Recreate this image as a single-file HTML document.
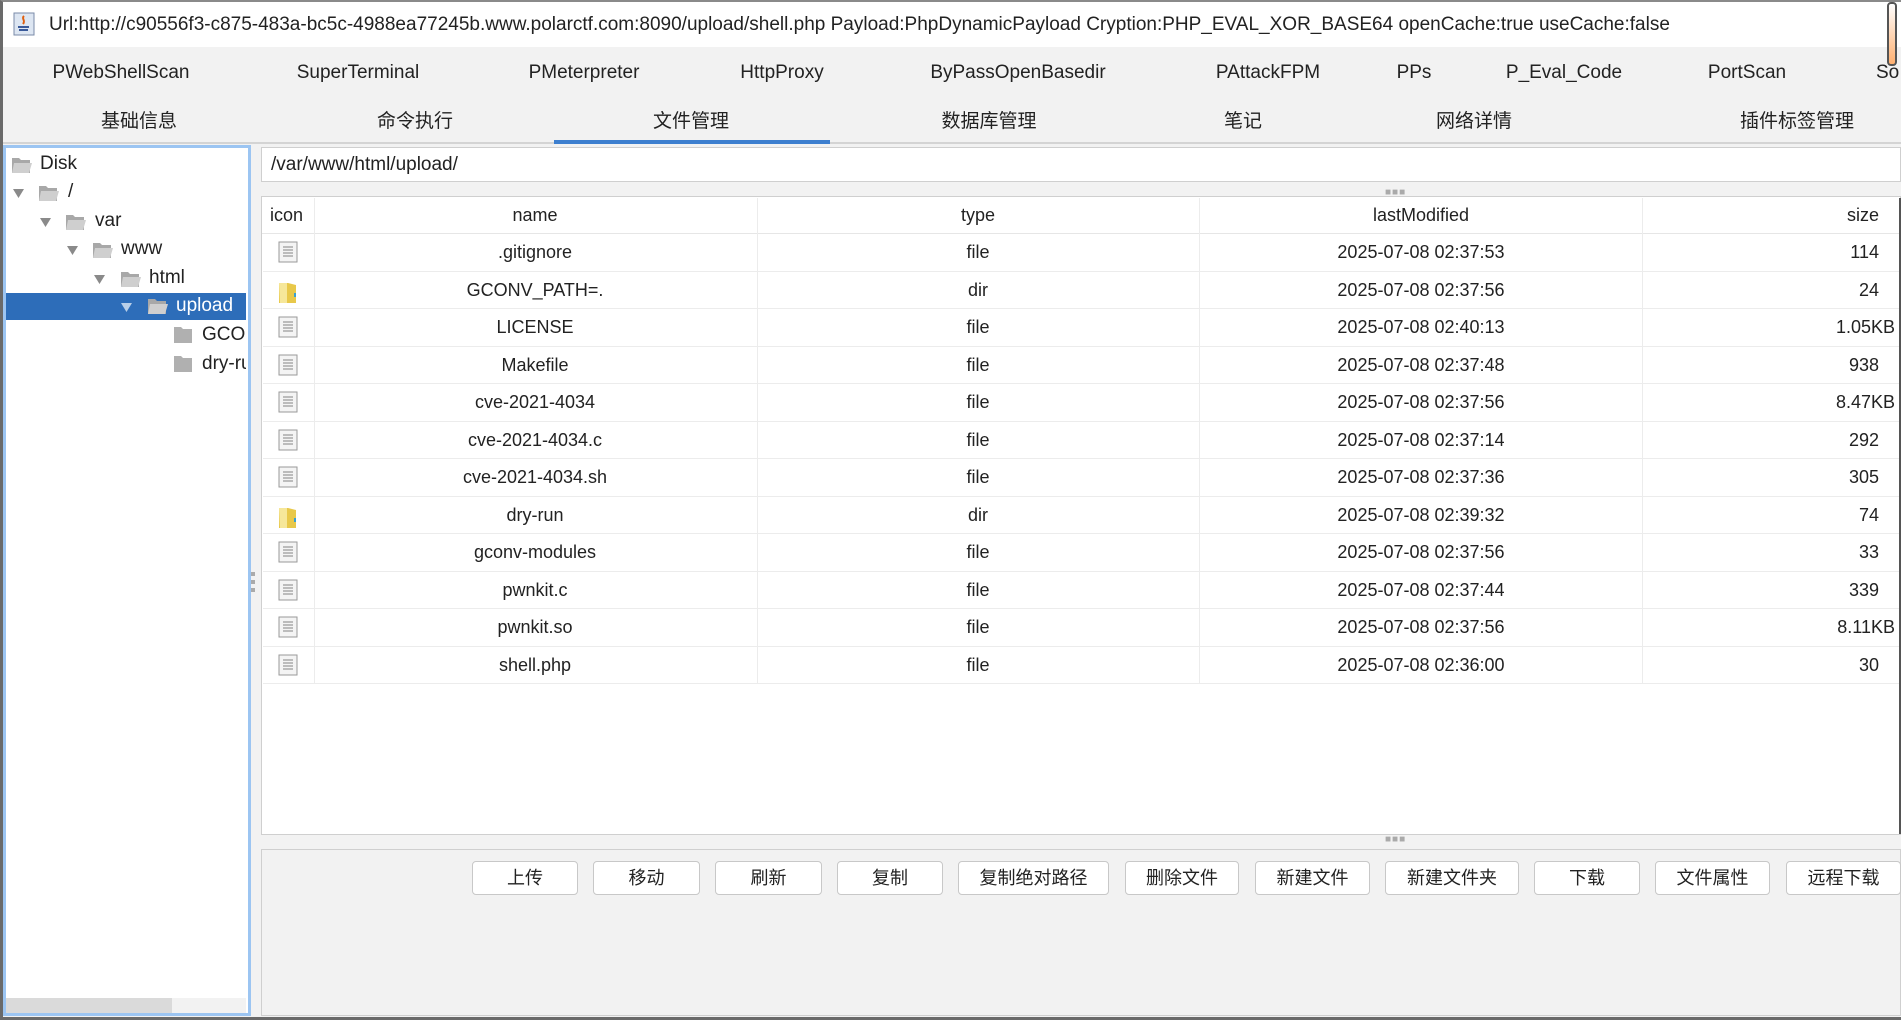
<!DOCTYPE html>
<html><head><meta charset="utf-8"><style>
*{margin:0;padding:0;box-sizing:border-box}
body{width:1901px;height:1020px;background:#f2f2f2;font-family:"Liberation Sans","Noto Sans CJK SC",sans-serif;color:#222;position:relative;overflow:hidden}
.a{position:absolute;white-space:nowrap}
.c{transform:translateX(-50%)}
#frame{position:absolute;left:0;top:0;width:1901px;height:1020px;border-left:3px solid #6a6a6a;border-bottom:3px solid #6a6a6a;border-top:2px solid #8a8a8a;pointer-events:none}
.t1{top:62px;font-size:19px}
.t2{top:106px;font-size:19px}
.tree{font-size:19px}
.row{position:absolute;left:263px;width:1636px;height:37.5px;border-bottom:1px solid #ececec;font-size:18px}
.row span{position:absolute;top:8px}
.btn{position:absolute;top:861px;height:34px;background:#fff;border:1px solid #c8c8c8;border-radius:4px;font-size:18px;text-align:center;line-height:32px}
</style></head><body>
<div class="a" style="left:0;top:0;width:1901px;height:47px;background:#fff"></div>
<svg class="a" style="left:13px;top:12px" width="22" height="24" viewBox="0 0 22 24"><rect x="1" y="1" width="20" height="22" fill="#dde6f2" stroke="#7a8ba8"/><path d="M11 4c-3 3 2 4-1 8" stroke="#e06010" stroke-width="2" fill="none"/><path d="M5 15h11M6 18h9" stroke="#3a5a9a" stroke-width="2"/></svg>
<div class="a" style="left:49px;top:14px;font-size:19px">Url:http://c90556f3-c875-483a-bc5c-4988ea77245b.www.polarctf.com:8090/upload/shell.php Payload:PhpDynamicPayload Cryption:PHP_EVAL_XOR_BASE64 openCache:true useCache:false</div>
<div class="a" style="left:1887px;top:2px;width:10px;height:64px;border:2px solid #555;border-radius:4px;background:linear-gradient(#fff,#ffb070)"></div>
<div class="a t1 c" style="left:121px">PWebShellScan</div>
<div class="a t1 c" style="left:358px">SuperTerminal</div>
<div class="a t1 c" style="left:584px">PMeterpreter</div>
<div class="a t1 c" style="left:782px">HttpProxy</div>
<div class="a t1 c" style="left:1018px">ByPassOpenBasedir</div>
<div class="a t1 c" style="left:1268px">PAttackFPM</div>
<div class="a t1 c" style="left:1414px">PPs</div>
<div class="a t1 c" style="left:1564px">P_Eval_Code</div>
<div class="a t1 c" style="left:1747px">PortScan</div>
<div class="a t1" style="left:1876px">So</div>
<div class="a t2 c" style="left:139px">基础信息</div>
<div class="a t2 c" style="left:415px">命令执行</div>
<div class="a t2 c" style="left:691px">文件管理</div>
<div class="a t2 c" style="left:989px">数据库管理</div>
<div class="a t2 c" style="left:1243px">笔记</div>
<div class="a t2 c" style="left:1474px">网络详情</div>
<div class="a t2 c" style="left:1797px">插件标签管理</div>
<div class="a" style="left:0;top:142px;width:1901px;height:2px;background:#d4d4d4"></div>
<div class="a" style="left:554px;top:140px;width:276px;height:4px;background:#3d7fcf"></div>
<!-- tree -->
<div class="a" style="left:3px;top:145px;width:248px;height:871px;background:#fff;border:3px solid #9cc5f2"></div>
<div class="a" style="left:6px;top:293px;width:240px;height:27px;background:#2d6db9"></div>
<div class="a" style="left:6px;top:998px;width:166px;height:15px;background:#dadada"></div>
<div class="a" style="left:172px;top:998px;width:74px;height:15px;background:#f2f2f2"></div>
<svg class="a" style="left:0;top:145px" width="250" height="240">
<defs><g id="fo"><path d="M0 3h7l2 2h9v13H0z" fill="#a8a8a8"/><path d="M2 8h18l-3 10H0z" fill="#cfcfcf"/></g>
<g id="fc"><path d="M0 2h7l2 2h9v14H0z" fill="#b0b0b0"/></g>
<path id="ar" d="M0 0h11l-5.5 9z" fill="#8a8a8a"/></defs>
<use href="#fo" x="12" y="10"/>
<use href="#ar" x="13" y="44"/><use href="#fo" x="39" y="38"/>
<use href="#ar" x="40" y="73"/><use href="#fo" x="66" y="67"/>
<use href="#ar" x="67" y="101"/><use href="#fo" x="93" y="95"/>
<use href="#ar" x="94" y="130"/><use href="#fo" x="121" y="124"/>
<path d="M121 158h11l-5.5 9z" fill="#b9cfe8"/><use href="#fo" x="148" y="151"/>
<use href="#fc" x="174" y="180"/><use href="#fc" x="174" y="209"/>
</svg>
<div class="a tree" style="left:40px;top:153px">Disk</div>
<div class="a tree" style="left:68px;top:181px">/</div>
<div class="a tree" style="left:95px;top:210px">var</div>
<div class="a tree" style="left:121px;top:238px">www</div>
<div class="a tree" style="left:149px;top:267px">html</div>
<div class="a tree" style="left:176px;top:295px;color:#fff">upload</div>
<div class="a" style="left:202px;top:324px;width:44px;overflow:hidden;font-size:19px">GCONV</div>
<div class="a" style="left:202px;top:353px;width:44px;overflow:hidden;font-size:19px">dry-run</div>
<svg class="a" style="left:250px;top:570px" width="8" height="30"><rect x="1" y="2" width="4" height="4" fill="#aaa"/><rect x="1" y="10" width="4" height="4" fill="#aaa"/><rect x="1" y="18" width="4" height="4" fill="#aaa"/></svg>
<!-- path -->
<div class="a" style="left:261px;top:147px;width:1640px;height:35px;background:#fff;border:1px solid #cfcfcf"></div>
<div class="a" style="left:271px;top:154px;font-size:19px">/var/www/html/upload/</div>
<div class="a" style="left:1385px;top:187px;font-size:10px;color:#aaa;letter-spacing:1px">■■■</div>
<!-- table -->
<div class="a" style="left:261px;top:196px;width:1640px;height:639px;background:#fff;border:1px solid #cfcfcf"></div>
<div class="a" style="left:262px;top:233px;width:1638px;height:1px;background:#e6e6e6"></div>
<div class="a" style="left:314px;top:198px;width:1px;height:485px;background:#ececec"></div>
<div class="a" style="left:757px;top:198px;width:1px;height:485px;background:#ececec"></div>
<div class="a" style="left:1199px;top:198px;width:1px;height:485px;background:#ececec"></div>
<div class="a" style="left:1642px;top:198px;width:1px;height:485px;background:#ececec"></div>
<div class="a" style="left:1899px;top:198px;width:2px;height:636px;background:#555"></div>
<div class="a" style="left:270px;top:205px;font-size:18px">icon</div>
<div class="a c" style="left:535px;top:205px;font-size:18px">name</div>
<div class="a c" style="left:978px;top:205px;font-size:18px">type</div>
<div class="a c" style="left:1421px;top:205px;font-size:18px">lastModified</div>
<div class="a" style="left:1847px;top:205px;font-size:18px">size</div>
<div id="rows"></div>
<script>
var d=[[".gitignore","file","2025-07-08 02:37:53","114"],["GCONV_PATH=.","dir","2025-07-08 02:37:56","24"],["LICENSE","file","2025-07-08 02:40:13","1.05KB"],["Makefile","file","2025-07-08 02:37:48","938"],["cve-2021-4034","file","2025-07-08 02:37:56","8.47KB"],["cve-2021-4034.c","file","2025-07-08 02:37:14","292"],["cve-2021-4034.sh","file","2025-07-08 02:37:36","305"],["dry-run","dir","2025-07-08 02:39:32","74"],["gconv-modules","file","2025-07-08 02:37:56","33"],["pwnkit.c","file","2025-07-08 02:37:44","339"],["pwnkit.so","file","2025-07-08 02:37:56","8.11KB"],["shell.php","file","2025-07-08 02:36:00","30"]];
var h="";
d.forEach(function(r,i){var t=234+i*37.5;
var ic=r[1]=="dir"?'<svg style="position:absolute;left:14px;top:7px" width="22" height="26"><path d="M2 4h9l8 2v18H2z" fill="#e8c84a"/><path d="M2 4h8v20H3z" fill="#f6e79a"/><rect x="17" y="14" width="2" height="4" fill="#3aa0d0"/></svg>':'<svg style="position:absolute;left:15px;top:7px" width="20" height="22"><rect x="1" y="1" width="18" height="20" fill="#f4f4f4" stroke="#999"/><path d="M5 6h10M5 9h10M5 12h10M5 15h10" stroke="#aaa" stroke-width="1.5"/></svg>';
h+='<div class="row" style="top:'+t+'px">'+ic+'<span style="left:272px;transform:translateX(-50%)">'+r[0]+'</span><span style="left:715px;transform:translateX(-50%)">'+r[1]+'</span><span style="left:1158px;transform:translateX(-50%)">'+r[2]+'</span><span style="right:'+(r[3].length>4?4:20)+'px">'+r[3]+'</span></div>';});
document.getElementById("rows").innerHTML=h;
</script>
<div class="a" style="left:1385px;top:834px;font-size:10px;color:#aaa;letter-spacing:1px">■■■</div>
<!-- bottom -->
<div class="a" style="left:261px;top:849px;width:1640px;height:167px;border:1px solid #cfcfcf;background:#f2f2f2"></div>
<div class="btn" style="left:472px;width:106px">上传</div>
<div class="btn" style="left:593px;width:107px">移动</div>
<div class="btn" style="left:715px;width:107px">刷新</div>
<div class="btn" style="left:837px;width:106px">复制</div>
<div class="btn" style="left:958px;width:151px">复制绝对路径</div>
<div class="btn" style="left:1125px;width:114px">删除文件</div>
<div class="btn" style="left:1255px;width:115px">新建文件</div>
<div class="btn" style="left:1385px;width:134px">新建文件夹</div>
<div class="btn" style="left:1534px;width:106px">下载</div>
<div class="btn" style="left:1655px;width:115px">文件属性</div>
<div class="btn" style="left:1786px;width:115px">远程下载</div>
<div id="frame"></div>
</body></html>
